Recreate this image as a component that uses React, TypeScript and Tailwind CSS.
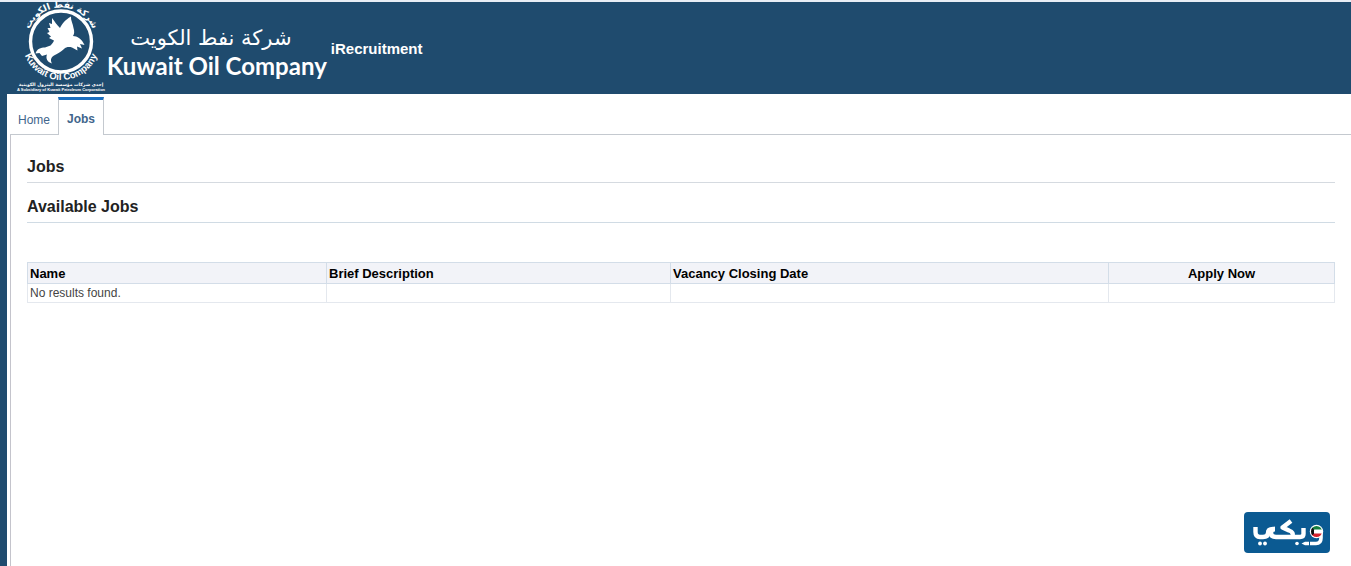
const columns = [
  { label: "Name", width: "w-[299px]", align: "text-left" },
  { label: "Brief Description", width: "w-[344px]", align: "text-left" },
  { label: "Vacancy Closing Date", width: "w-[438px]", align: "text-left" },
  { label: "Apply Now", width: "", align: "text-center" },
];

function Emblem() {
  return (
    <svg viewBox="0 0 92 92" className="h-[92px] w-[92px] shrink-0 overflow-visible" fill="#fff" role="img" aria-label="Kuwait Oil Company emblem">
      <defs>
        <path id="arcTop" d="M 12 39.500 A 34 34 0 0 1 80 39.500" />
        <path id="arcBottom" d="M 7 39 A 39 39 0 0 0 85 39" />
      </defs>
      <circle cx="46" cy="39.500" r="30.500" fill="none" stroke="#fff" strokeWidth="3.400" />
      <path d="M37 16 C40 20 42 23 45 26 C47 22 50 18 56 14.500 C55.500 18 58 22 58.500 26 C59.500 29 59.500 32 58 34 C62 34 67 37 69.500 43 L65 42 L67 46.500 L62 44.500 L62.500 48.500 L57 45.500 C54 44.500 51 45 49 47 C46 50 42 52 39 53.500 C36 55.500 35 58 37 61.500 C32 60 30.500 56 32 52.500 L27 54 L24.500 51 L20.500 51.500 C21.500 47 26 45.500 30 45.500 L35.500 43.500 C37 42 38.500 40 39 38.500 L34 36 L36 34.500 L32 31 L34.500 30 L32.500 26 L35.500 26 L34 21 L37 22 Z" />
      <text fontFamily="DejaVu Sans, sans-serif" fontSize="9" fontWeight="700" textAnchor="middle" direction="rtl">
        <textPath href="#arcTop" startOffset="50%">شركة نفط الكويت</textPath>
      </text>
      <text fontFamily="Liberation Sans, sans-serif" fontSize="9.500" fontWeight="700" textAnchor="middle">
        <textPath href="#arcBottom" startOffset="50%">Kuwait Oil Company</textPath>
      </text>
      <text x="46" y="84" fontFamily="DejaVu Sans, sans-serif" fontSize="4.500" fontWeight="700" textAnchor="middle">إحدى شركات مؤسسة البترول الكويتية</text>
      <text x="46" y="89" fontFamily="Liberation Sans, sans-serif" fontSize="4" fontWeight="700" textAnchor="middle">A Subsidiary of Kuwait Petroleum Corporation</text>
    </svg>
  );
}

function WikiBadge() {
  return (
    <svg viewBox="0 0 86 41" className="h-[41px] w-[86px]" role="img" aria-label="ويكي">
      <defs>
        <clipPath id="flagDisc">
          <circle cx="72.5" cy="19.500" r="5.500" />
        </clipPath>
      </defs>
      <rect width="86" height="41" rx="4" fill="#0b5a92" />
      <g fill="none" stroke="#fff" strokeWidth="4.400" strokeLinejoin="round">
        <path d="M11.500 15 V20 Q11.500 25 16 25 H19 Q24 25 24 21 Q24 17 29 17 H31" />
        <path d="M31 17 Q27 17 27 21 Q27 25 32 25 H56 Q59.500 25 59.500 22 V16" />
        <path d="M48.500 25 Q50 20 45 18.500 L38.500 15.500 L47 9" />
        <path d="M77 20 V26 Q77 31.500 72 31.500 H66" strokeWidth="3.600" />
      </g>
      <circle cx="72.5" cy="19.500" r="6.700" fill="#fff" />
      <g clipPath="url(#flagDisc)">
        <rect x="66" y="13" width="13" height="4.500" fill="#16803f" />
        <rect x="66" y="21.500" width="13" height="5" fill="#d5202c" />
        <path d="M66 13 L70 17.500 V21.500 L66 26 Z" fill="#111" />
      </g>
      <g fill="#fff">
        <circle cx="16" cy="31.500" r="1.900" />
        <circle cx="21" cy="31.500" r="1.900" />
        <circle cx="53" cy="31.500" r="1.800" />
        <path d="M57.500 31.500 L61 29.700 H65 V33.300 H61 Z" />
      </g>
    </svg>
  );
}

export default function App() {
  return (
    <div className="flex min-h-screen flex-col border-t-2 border-[#e8edf5] bg-[#1f4b6e] font-['Liberation_Sans',Arial,sans-serif]">
      <header className="flex h-[92px] shrink-0 items-center pl-[15px] text-white">
        <Emblem />
        <div className="flex flex-col items-center pt-2">
          <span dir="rtl" className="pr-3 font-['DejaVu_Sans',sans-serif] text-[21px] leading-7">شركة نفط الكويت</span>
          <span className="font-['Lato',sans-serif] text-[24px] leading-7 font-bold">Kuwait Oil Company</span>
        </div>
        <span className="pt-0.5 pl-1 text-[15px] font-bold">iRecruitment</span>
      </header>
      <div className="ml-[7px] flex grow flex-col bg-white pt-[3px] pl-[3px]">
        <nav className="flex h-[38px] items-stretch border-b border-[#c4c9cf] text-xs text-[#41658c]">
          <a href="#home" className="flex items-center px-2 pt-2">Home</a>
          <a href="#jobs" aria-current="page" className="-mb-px flex items-center border-x border-t-3 border-x-[#c4c9cf] border-t-[#1b6fc0] bg-white px-2 pt-0.5 font-bold">Jobs</a>
        </nav>
        <main className="grow border-l border-[#c4c4cc] pt-5 pr-4 pl-4">
          <h1 className="border-b border-[#d5dae0] pb-[3px] text-base leading-6 font-bold text-[#222]">Jobs</h1>
          <h2 className="mt-3 border-b border-[#d0dbe4] pb-[3px] text-base leading-6 font-bold text-[#222]">Available Jobs</h2>
          <table className="mt-[39px] w-full table-fixed border-collapse">
            <thead>
              <tr className="h-[21px] bg-[#f2f3f8] text-[13px] leading-4 text-black">
                {columns.map((c) => (
                  <th key={c.label} scope="col" className={`border border-[#d3dde8] px-0.5 pt-0.5 pb-0 font-bold ${c.width} ${c.align}`}>{c.label}</th>
                ))}
              </tr>
            </thead>
            <tbody>
              <tr className="h-[19px] text-xs leading-4 text-[#444]">
                <td className="border border-[#e4e8ee] px-0.5 py-0">No results found.</td>
                <td className="border border-[#e4e8ee]" />
                <td className="border border-[#e4e8ee]" />
                <td className="border border-[#e4e8ee]" />
              </tr>
            </tbody>
          </table>
        </main>
      </div>
      <div className="fixed right-[21px] bottom-[13px]">
        <WikiBadge />
      </div>
    </div>
  );
}
